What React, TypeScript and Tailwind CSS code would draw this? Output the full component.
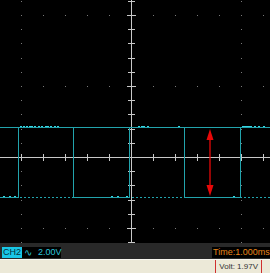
import React from "react";

const AXIS = "#c8c8c8";
const DOT = "#7a7a7a";
const TRACE = "#22a4ad";
const NOISE = "#38d4e2";

// graticule positions
const xTicks = Array.from({ length: 13 }, (_, i) => 21 + i * 22 - 22);
const yTicks = Array.from({ length: 18 }, (_, i) => 0.8 + i * 14.2);
const dotCols = [21, 241];
const dotRows = [15, 86, 228];

// square wave edges, period ~111px
const edges = [18, 73, 129, 184, 240];
const lows: [number, number][] = [[0, 18], [73, 129], [184, 240]];

const noiseTop = [20, 23, 26, 29, 31, 34, 38, 41, 45, 47, 50, 54, 57, 138, 141, 143, 147, 178, 242, 244, 246, 248, 250, 254, 258, 263];
const noiseBottom = [3, 9, 14, 111, 117, 126, 233];

function Scope() {
  return (
    <svg width={270} height={243} className="block bg-black" shapeRendering="crispEdges">
      {/* dotted graticule */}
      {dotCols.map(x =>
        yTicks.map(y => <rect key={`c${x}-${y}`} x={x} y={Math.round(y)} width={1} height={1} fill={DOT} />)
      )}
      {dotRows.map(y =>
        xTicks.map(x => <rect key={`r${y}-${x}`} x={x} y={y} width={1} height={1} fill={DOT} />)
      )}

      {/* axes */}
      <rect x={0} y={157} width={270} height={1} fill={AXIS} />
      <rect x={131} y={0} width={1} height={243} fill={AXIS} />
      {xTicks.map(x => (
        <rect key={`xt${x}`} x={x} y={154} width={1} height={7} fill={AXIS} />
      ))}
      {yTicks.map((y, i) => (
        <rect
          key={`yt${i}`}
          x={i % 5 === 1 ? 127 : 128}
          y={Math.round(y)}
          width={i % 5 === 1 ? 9 : 7}
          height={1}
          fill={AXIS}
        />
      ))}

      {/* cursors */}
      <rect x={0} y={127} width={270} height={1} fill={TRACE} />
      <line x1={0} y1={197.5} x2={270} y2={197.5} stroke={TRACE} strokeWidth={1} strokeDasharray="2 2" />

      {/* trace */}
      {lows.map(([a, b]) => (
        <rect key={`l${a}`} x={a} y={197} width={b - a + 1} height={1} fill={TRACE} />
      ))}
      {edges.map(x => (
        <rect key={`e${x}`} x={x} y={127} width={1} height={71} fill={TRACE} />
      ))}
      {noiseTop.map(x => (
        <rect key={`nt${x}`} x={x} y={126} width={2} height={1} fill={NOISE} />
      ))}
      {noiseBottom.map(x => (
        <rect key={`nb${x}`} x={x} y={196} width={2} height={1} fill={NOISE} />
      ))}

      {/* measurement arrow */}
      <g shapeRendering="auto">
        <line x1={210} y1={138} x2={210} y2={187} stroke="#e80808" strokeWidth={1.3} />
        <polygon points="210,129 206.5,140 213.5,140" fill="#e80808" />
        <polygon points="210,196 206.5,185 213.5,185" fill="#e80808" />
      </g>
    </svg>
  );
}

export default function App() {
  return (
    <div className="w-[270px] h-[273px] flex flex-col bg-black overflow-hidden font-['Liberation_Sans',Arial,sans-serif]">
      <Scope />

      {/* channel / timebase bar */}
      <div className="h-[16px] bg-[#292929] flex items-start justify-between pt-[4px] pl-[2px]">
        <div className="h-[11px] w-[59px] bg-black flex items-center text-[9px] leading-none">
          <span className="h-full bg-[#19c6e6] text-[#06303a] px-[1px] flex items-center">CH2</span>
          <span className="text-[#2bc6dc] ml-[2px] text-[10px]">∿</span>
          <span className="text-[#2bc6dc] ml-[6px]">2.00V</span>
        </div>
        <div className="h-[11px] w-[58px] bg-black flex items-center pl-[1px] text-[9px] leading-none text-[#e8861a]">
          Time:1.000ms
        </div>
      </div>

      {/* status bar */}
      <div className="h-[14px] bg-[#ece9d8] border-t border-[#f8f7f0] flex justify-end pr-[8px]">
        <div className="h-full border-x border-[#d03030] px-[3px] flex items-center text-[8px] leading-none text-[#333]">
          Volt: 1.97V
        </div>
      </div>
    </div>
  );
}
